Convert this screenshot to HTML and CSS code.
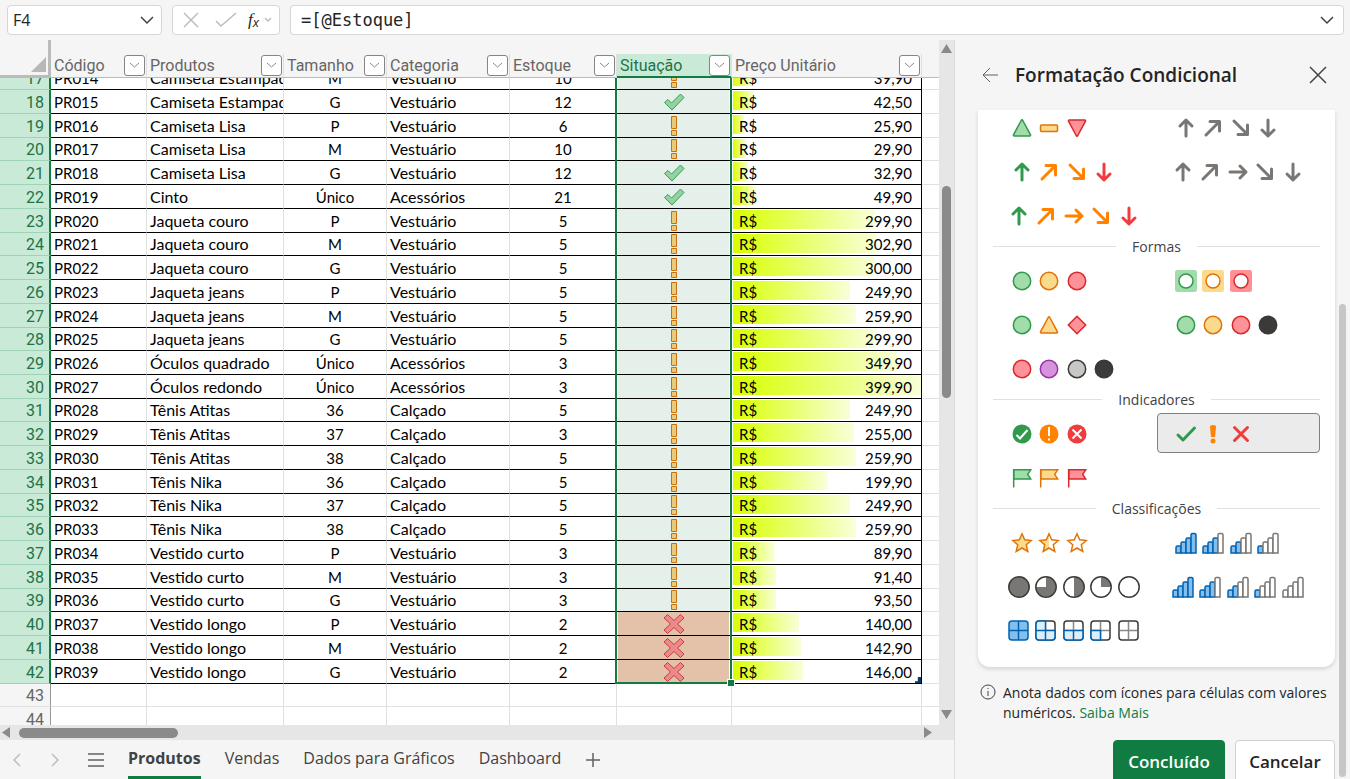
FILE: index.html
```html
<!DOCTYPE html>
<html lang="pt-BR">
<head>
    <meta charset="UTF-8">
    <meta name="viewport" content="width=device-width, initial-scale=1.0">
    <title>Controle de Estoque</title>
    <link rel="stylesheet" href="styles.css">
</head>
<body>
    <header class="formula-bar">
        <div class="name-box">
            <input type="text" value="F4" aria-label="Caixa de nome">
            <svg width="14" height="14" viewBox="0 0 14 14"><path d="M1 4l6 6 6-6"/></svg>
        </div>
        <div class="fx-box">
            <button aria-label="Cancelar entrada"><svg class="muted" width="18" height="18" viewBox="0 0 18 18"><path d="M2 2l14 14M16 2L2 16"/></svg></button>
            <button aria-label="Confirmar entrada"><svg class="muted" width="22" height="18" viewBox="0 0 22 18"><path d="M1 10l5 5L21 2"/></svg></button>
            <button class="fx" aria-label="Inserir função"><i>f</i><i class="fx-x">x</i><svg class="muted" width="8" height="8" viewBox="0 0 8 8"><path d="M1 2l3 3 3-3"/></svg></button>
        </div>
        <div class="formula-box">
            <input type="text" value="=[@Estoque]" aria-label="Barra de fórmulas">
            <svg width="14" height="14" viewBox="0 0 14 14"><path d="M1 4l6 6 6-6"/></svg>
        </div>
    </header>

    <div class="workspace">
        <main class="book">
            <div class="sheet-area">
                <div class="grid">
                    <div class="grid-top"></div>
                    <table class="sheet">
                        <colgroup>
                            <col class="col-num"><col class="col-codigo"><col class="col-produto"><col class="col-tamanho">
                            <col class="col-categoria"><col class="col-estoque"><col class="col-situacao"><col class="col-preco"><col>
                        </colgroup>
                        <thead><tr id="head-row"></tr></thead>
                    </table>
                    <div class="grid-scroll" id="grid-scroll">
                        <table class="sheet">
                            <colgroup>
                                <col class="col-num"><col class="col-codigo"><col class="col-produto"><col class="col-tamanho">
                                <col class="col-categoria"><col class="col-estoque"><col class="col-situacao"><col class="col-preco"><col>
                            </colgroup>
                            <tbody id="rows"></tbody>
                        </table>
                    </div>
                </div>
                <div class="vscroll">
                    <span class="arrow-up"></span>
                    <span class="vthumb"></span>
                    <span class="arrow-down"></span>
                </div>
            </div>
            <div class="hscroll">
                <span class="arrow-left"></span>
                <span class="hthumb"></span>
                <span class="arrow-right"></span>
            </div>
            <nav class="tabs">
                <button class="tab-nav" aria-label="Anterior"><svg width="10" height="16" viewBox="0 0 10 16"><path d="M8 2L2 8l6 6"/></svg></button>
                <button class="tab-nav" aria-label="Próxima"><svg width="10" height="16" viewBox="0 0 10 16"><path d="M2 2l6 6-6 6"/></svg></button>
                <button class="tab-menu" aria-label="Todas as planilhas"><svg width="16" height="16" viewBox="0 0 16 16"><path d="M0 2h16M0 8h16M0 14h16"/></svg></button>
                <button class="tab active">Produtos</button>
                <button class="tab">Vendas</button>
                <button class="tab">Dados para Gráficos</button>
                <button class="tab">Dashboard</button>
                <button class="tab-add" aria-label="Nova planilha"><svg width="16" height="16" viewBox="0 0 16 16"><path d="M8 1v14M1 8h14"/></svg></button>
            </nav>
        </main>

        <aside class="panel">
            <div class="panel-head">
                <button aria-label="Voltar"><svg class="back" width="18" height="18" viewBox="0 0 18 18"><path d="M17 9H2M9 2L2 9l7 7"/></svg></button>
                <h1>Formatação Condicional</h1>
                <button aria-label="Fechar"><svg width="18" height="18" viewBox="0 0 18 18"><path d="M1 1l16 16M17 1L1 17"/></svg></button>
            </div>
            <div class="card">
                <div class="icon-sets" id="icon-sets"></div>
            </div>
            <div class="hint">
                <svg width="16" height="16" viewBox="0 0 16 16"><circle cx="8" cy="8" r="7"/><path d="M8 7v5M8 4v1"/></svg>
                <p>Anota dados com ícones para células com valores numéricos. <a href="#">Saiba Mais</a></p>
            </div>
            <div class="actions">
                <button class="btn primary">Concluído</button>
                <button class="btn">Cancelar</button>
            </div>
            <span class="panel-thumb"></span>
        </aside>
    </div>

    <script>
        const columns = ['Código', 'Produtos', 'Tamanho', 'Categoria', 'Estoque', 'Situação', 'Preço Unitário'];

        // produto, tamanho, categoria, estoque, preço (a partir de PR014)
        const products = [
            ['Camiseta Estampada', 'M', 'Vestuário', 10, 39.9],
            ['Camiseta Estampada', 'G', 'Vestuário', 12, 42.5],
            ['Camiseta Lisa', 'P', 'Vestuário', 6, 25.9],
            ['Camiseta Lisa', 'M', 'Vestuário', 10, 29.9],
            ['Camiseta Lisa', 'G', 'Vestuário', 12, 32.9],
            ['Cinto', 'Único', 'Acessórios', 21, 49.9],
            ['Jaqueta couro', 'P', 'Vestuário', 5, 299.9],
            ['Jaqueta couro', 'M', 'Vestuário', 5, 302.9],
            ['Jaqueta couro', 'G', 'Vestuário', 5, 300],
            ['Jaqueta jeans', 'P', 'Vestuário', 5, 249.9],
            ['Jaqueta jeans', 'M', 'Vestuário', 5, 259.9],
            ['Jaqueta jeans', 'G', 'Vestuário', 5, 299.9],
            ['Óculos quadrado', 'Único', 'Acessórios', 3, 349.9],
            ['Óculos redondo', 'Único', 'Acessórios', 3, 399.9],
            ['Tênis Atitas', '36', 'Calçado', 5, 249.9],
            ['Tênis Atitas', '37', 'Calçado', 3, 255],
            ['Tênis Atitas', '38', 'Calçado', 5, 259.9],
            ['Tênis Nika', '36', 'Calçado', 5, 199.9],
            ['Tênis Nika', '37', 'Calçado', 5, 249.9],
            ['Tênis Nika', '38', 'Calçado', 5, 259.9],
            ['Vestido curto', 'P', 'Vestuário', 3, 89.9],
            ['Vestido curto', 'M', 'Vestuário', 3, 91.4],
            ['Vestido curto', 'G', 'Vestuário', 3, 93.5],
            ['Vestido longo', 'P', 'Vestuário', 2, 140],
            ['Vestido longo', 'M', 'Vestuário', 2, 142.9],
            ['Vestido longo', 'G', 'Vestuário', 2, 146]
        ];
        const maxPrice = 399.9;

        const status = {
            ok: '<svg class="st-ok" width="22" height="20" viewBox="0 0 22 20"><path d="M1.500 10.500L5 7.500l3.500 3.500L17.500 2 21 5.500 9 18z"/></svg>',
            warn: '<svg class="st-warn" width="22" height="20" viewBox="0 0 22 20"><path d="M8.500 .5h5v12h-5zM8.500 14.500h5v5h-5z"/></svg>',
            bad: '<svg class="st-bad" width="22" height="20" viewBox="0 0 22 20"><path d="M4.500 .5L11 6.500 17.500 .5 21 4 14.500 10 21 16l-3.500 3.500L11 13.500l-6.500 6L1 16l6.500-6L1 4z"/></svg>'
        };

        document.getElementById('head-row').innerHTML = '<th class="corner"><span></span></th>' + columns.map(name => `
            <th class="${name === 'Situação' ? 'selected' : ''}">
                <div class="th-box"><span>${name}</span>
                    <button aria-label="Filtrar ${name}"><svg width="11" height="7" viewBox="0 0 11 7"><path d="M1 1l4.500 4L10 1"/></svg></button>
                </div>
            </th>`).join('') + '<th></th>';

        const rows = products.map((p, i) => {
            const [name, size, category, stock, price] = p;
            const kind = stock > 10 ? 'ok' : stock > 2 ? 'warn' : 'bad';
            const last = i === products.length - 1;
            return `<tr class="filled${last ? ' last' : ''}">
                <th>${17 + i}</th>
                <td>PR0${14 + i}</td>
                <td class="name">${name}</td>
                <td class="center">${size}</td>
                <td class="name">${category}</td>
                <td class="center">${stock}</td>
                <td class="situacao ${kind}">${status[kind]}</td>
                <td class="preco" style="background-size: ${(price / maxPrice * 100).toFixed(0)}% 19px">
                    <div class="money"><span>R$</span><span>${price.toFixed(2).replace('.', ',')}</span></div>
                </td>
                <td></td>
            </tr>`;
        });
        [43, 44].forEach(n => rows.push(`<tr><th>${n}</th>${'<td></td>'.repeat(8)}</tr>`));
        document.getElementById('rows').innerHTML = rows.join('');
        document.getElementById('grid-scroll').scrollTop = 12;

        // Every glyph is drawn in a 24x24 box
        const star = 'M12 2.800l2.700 6 6.500.7-4.900 4.300 1.500 6.700-5.800-3.500-5.800 3.500 1.500-6.700L2.800 9.500l6.500-.7z';

        function bars(n) {
            return [[2, 15], [7, 11], [12, 7], [17, 2.5]].map(([x, y], i) =>
                `<path class="${i < n ? 'bar-on' : 'bar-off'}" d="M${x} 22V${y + 1.5}q0-1.500 1.500-1.500h2q1.500 0 1.500 1.500V22z"/>`).join('');
        }

        function boxes(n) {
            if (n === 4) {
                return '<rect class="box-full" x="2" y="2" width="19" height="19" rx="3"/><path class="box-line" d="M11.500 2v19M2 11.500h19"/>';
            }
            const on = [
                '',
                'M2 11.500h9.500V21H5q-3 0-3-3z',
                'M2 11.500h19V18q0 3-3 3H5q-3 0-3-3zM11.500 11.500V21',
                'M11.500 2v9.500H21V18q0 3-3 3H5q-3 0-3-3V5q0-3 3-3zM2 11.500h9.500V21'
            ][n];
            return `<rect class="box-off" x="2" y="2" width="19" height="19" rx="3"/><path class="box-grid" d="M11.500 3v17M3 11.500h17"/><path class="box-on" d="${on}"/>`;
        }

        const glyphs = {
            up: '<path class="line" d="M12 20V4.500M6 10l6-6 6 6"/>',
            down: '<path class="line" d="M12 4v15.500M6 14l6 6 6-6"/>',
            right: '<path class="line" d="M4 12h15.500M14 6l6 6-6 6"/>',
            ne: '<path class="line" d="M5 19L18.500 5.500M9 5.500h9.500V15"/>',
            se: '<path class="line" d="M5 5l13.500 13.500M9 18.500h9.500V9"/>',
            triangle: '<path class="shape" d="M11.200 4.500q.8-1.300 1.600 0l7.700 14.300q.3 1.200-.8 1.200H4.300q-1.100 0-.8-1.200z"/>',
            triangleDown: '<path class="shape" d="M11.200 19.500q.8 1.300 1.600 0l7.700-14.300q.3-1.200-.8-1.200H4.300q-1.100 0-.8 1.200z"/>',
            dash: '<rect class="shape" x="3.500" y="9" width="17" height="6.500" rx="1"/>',
            circle: '<circle class="shape" cx="12" cy="12" r="8.700"/>',
            framed: '<rect class="frame" x="1" y="1" width="22" height="22" rx="2.500"/><circle class="hole" cx="12" cy="12" r="7"/>',
            diamond: '<path class="shape" d="M12 3.300l8.700 8.700-8.700 8.700L3.300 12z"/>',
            badgeOk: '<circle class="solid" cx="12" cy="12" r="9.500"/><path class="mark" d="M6.500 13l3.500 3.500 7.500-8.500"/>',
            badgeWarn: '<circle class="solid" cx="12" cy="12" r="9.500"/><path class="mark" d="M12 5v9M12 16.500v2"/>',
            badgeBad: '<circle class="solid" cx="12" cy="12" r="9.500"/><path class="mark" d="M7.500 7.500l9 9M16.500 7.500l-9 9"/>',
            check: '<path class="line" d="M4 13l5 5L20.500 6"/>',
            bang: '<path class="solid" d="M9 4.500q0-1.500 3-1.500t3 1.500l-1 10.500h-4z"/><circle class="solid" cx="12" cy="19" r="2.500"/>',
            cross: '<path class="line" d="M5.500 5.500l13 13M18.500 5.500l-13 13"/>',
            flag: '<path class="shape" d="M3.700 3.800h17l-3 4.500 3 4.700h-17z"/><path class="pole" d="M3.700 3v18.500"/>',
            starFull: `<path class="shape" d="${star}"/>`,
            starHalf: `<path class="tint" d="M12 2.800v14.200l-5.800 3.500 1.500-6.700L2.800 9.500l6.500-.7z"/><path class="outline" d="${star}"/>`,
            starEmpty: `<path class="outline" d="${star}"/>`,
            pie4: '<circle class="pie" cx="12" cy="12" r="10.200"/>',
            pie3: '<path class="pie-fill" d="M12 12V2a10 10 0 1 1-10 10z"/><circle class="pie-ring" cx="12" cy="12" r="10.200"/>',
            pie2: '<path class="pie-fill" d="M12 2a10 10 0 0 1 0 20z"/><circle class="pie-ring" cx="12" cy="12" r="10.200"/>',
            pie1: '<path class="pie-fill" d="M12 12V2a10 10 0 0 1 10 10z"/><circle class="pie-ring" cx="12" cy="12" r="10.200"/>',
            pie0: '<circle class="pie-ring" cx="12" cy="12" r="10.200"/>'
        };
        for (let n = 0; n <= 4; n++) {
            glyphs['bars' + n] = bars(n);
            glyphs['boxes' + n] = boxes(n);
        }

        const groups = [
            { options: [
                'triangle:green dash:amber triangleDown:red',
                'up:gray ne:gray se:gray down:gray',
                'up:green ne:orange se:orange down:coral',
                'up:gray ne:gray right:gray se:gray down:gray',
                'up:green ne:orange right:orange se:orange down:coral'
            ] },
            { title: 'Formas', options: [
                'circle:green circle:amber circle:red',
                'framed:green framed:amber framed:red',
                'circle:green triangle:amber diamond:red',
                'circle:green circle:amber circle:red circle:black',
                'circle:red circle:purple circle:silver circle:black'
            ] },
            { title: 'Indicadores', options: [
                'badgeOk:green badgeWarn:orange badgeBad:coral',
                'check:green bang:orange cross:coral',
                'flag:green flag:amber flag:red'
            ] },
            { title: 'Classificações', options: [
                'starFull:amber starHalf:amber starEmpty:amber',
                'bars4 bars3 bars2 bars1',
                'pie4 pie3 pie2 pie1 pie0',
                'bars4 bars3 bars2 bars1 bars0',
                'boxes4 boxes3 boxes2 boxes1 boxes0'
            ] }
        ];
        const selectedSet = 'check:green bang:orange cross:coral';
        const offsets = [0, 27, 55, 82, 110];

        function renderOption(set) {
            const items = set.split(' ');
            const drawing = items.map((item, i) => {
                const [glyph, color] = item.split(':');
                return `<g class="${color || ''}" transform="translate(${offsets[i]} 0)">${glyphs[glyph]}</g>`;
            }).join('');
            const classes = ['option'];
            if (items.length === 5) classes.push('wide');
            if (set === selectedSet) classes.push('selected');
            return `<button class="${classes.join(' ')}" aria-label="Conjunto de ${items.length} ícones"><svg width="136" height="24" viewBox="0 0 136 24">${drawing}</svg></button>`;
        }

        document.getElementById('icon-sets').innerHTML = groups.map(g => `
            ${g.title ? `<h2>${g.title}</h2>` : ''}
            <div class="options">${g.options.map(renderOption).join('')}</div>`).join('');
    </script>
</body>
</html>
```
FILE: styles.css
```css
* {
    margin: 0;
    padding: 0;
    box-sizing: border-box;
}

body {
    height: 100vh;
    display: flex;
    flex-direction: column;
    overflow: hidden;
    background: #f5f5f5;
    color: #242424;
    font-family: 'Open Sans', sans-serif;
    font-size: 14px;
}

button {
    border: none;
    background: none;
    font: inherit;
    color: inherit;
    cursor: pointer;
}

svg {
    display: block;
    flex: none;
    fill: none;
    stroke: #424242;
    stroke-width: 1.5;
}

/* Formula bar */
.formula-bar {
    display: flex;
    gap: 10px;
    height: 40px;
    padding: 5px 6px 5px 7px;
    flex: none;
}

.name-box,
.fx-box,
.formula-box {
    display: flex;
    align-items: center;
    height: 30px;
    background: #fff;
    border: 1px solid #d6d6d6;
    border-radius: 4px;
}

.name-box {
    width: 155px;
    padding: 0 7px 0 5px;
}

.formula-box {
    flex: 1;
    padding: 0 9px 0 10px;
}

.name-box input,
.formula-box input {
    flex: 1;
    min-width: 0;
    border: none;
    outline: none;
    color: #242424;
    font-family: 'Open Sans', sans-serif;
    font-size: 16px;
}

.formula-box input {
    font-family: 'DejaVu Sans Mono', monospace;
    font-size: 17px;
}

.fx-box {
    width: 108px;
    padding: 0 4px 0 9px;
    gap: 15px;
}

.muted {
    stroke: #bdbdbd;
}

.fx {
    display: flex;
    align-items: center;
    margin-left: -4px;
    font-family: 'Liberation Serif', serif;
    font-size: 17px;
}

.fx-x {
    font-family: 'Open Sans', sans-serif;
    font-size: 13px;
    padding-top: 4px;
    margin-right: 5px;
}

/* Layout */
.workspace {
    flex: 1;
    min-height: 0;
    display: flex;
}

.book {
    flex: 1;
    min-width: 0;
    display: flex;
    flex-direction: column;
}

.sheet-area {
    flex: 1;
    min-height: 0;
    display: flex;
}

.grid {
    flex: 1;
    min-width: 0;
    display: flex;
    flex-direction: column;
}

.grid-top {
    flex: none;
    width: 51px;
    height: 14px;
    border-right: 3px solid #bbb;
}

.grid-scroll {
    flex: 1;
    min-height: 0;
    overflow: hidden;
    background: #fff;
}

/* Spreadsheet */
.sheet {
    width: 100%;
    table-layout: fixed;
    border-collapse: separate;
    border-spacing: 0;
    color: #000;
    font-family: Lato, sans-serif;
    font-size: 15px;
    line-height: 20px;
}

.col-num { width: 51px; }
.col-codigo { width: 96px; }
.col-produto { width: 137px; }
.col-tamanho { width: 103px; }
.col-categoria { width: 123px; }
.col-estoque { width: 107px; }
.col-situacao { width: 115px; }
.col-preco { width: 190px; }

.sheet thead th {
    height: 24px;
    border-right: 1px solid #e0e0e0;
    border-bottom: 1px solid #bbb;
    color: #666;
    font-family: Roboto, sans-serif;
    font-size: 16px;
    font-weight: 400;
    text-align: left;
}

.sheet thead th.corner {
    border-right: 3px solid #bbb;
    border-bottom: 3px solid #bbb;
}

.corner span {
    display: block;
    margin-left: auto;
    margin-right: 2px;
    width: 15px;
    height: 15px;
    background: #b8b8b8;
    clip-path: polygon(100% 0, 100% 100%, 0 100%);
}

.sheet thead th.selected {
    background: #caead8;
    border-bottom-color: #107c41;
    box-shadow: inset 0 -1px #107c41;
    color: #217346;
}

.sheet thead th:last-child {
    border-right: none;
}

.th-box {
    display: flex;
    align-items: center;
    justify-content: space-between;
    height: 21px;
    padding: 0 1px 0 3px;
}

.th-box button {
    display: flex;
    align-items: center;
    justify-content: center;
    width: 21px;
    height: 21px;
    background: #fff;
    border: 1px solid #858585;
    border-radius: 3px;
}

.th-box svg {
    stroke: #8a8a8a;
    stroke-width: 1;
}

.sheet tbody tr {
    height: 24px;
}

/* the zoom level drops one pixel every few rows */
.sheet tbody tr:nth-child(4n):nth-child(-n+12),
.sheet tbody tr:nth-child(4n+3):nth-child(n+15) {
    height: 23px;
}

.sheet td,
.sheet tbody th {
    padding: 1px 3px;
    border-right: 1px solid #e0e0e0;
    border-bottom: 1px solid #e0e0e0;
    overflow: hidden;
    white-space: nowrap;
}

.sheet .name {
    font-size: 16px;
}

.sheet tbody th {
    padding: 2px 6px 0 0;
    background: #f5f5f5;
    border-right-color: #999;
    color: #666;
    font-family: Roboto, sans-serif;
    font-size: 16px;
    font-weight: 400;
    text-align: right;
}

.sheet .filled th {
    padding-right: 5px;
    background: #caead8;
    border-right: 2px solid #107c41;
    border-bottom-color: #9fd3b8;
    color: #217346;
}

.sheet .filled td {
    border-bottom-color: #000;
}

.sheet .filled td:last-child {
    border-bottom-color: #e0e0e0;
}

.sheet td:last-child {
    border-right: none;
}

.center {
    text-align: center;
}

.sheet .situacao {
    position: relative;
    padding: 0;
    overflow: visible;
    background: #e6f0ea;
    border-right-color: #107c41;
    box-shadow: inset 1px 0 #fff, inset -2px 0 #fff;
}

.sheet .situacao.bad {
    background: #e4c2aa;
}

.situacao::after {
    content: '';
    position: absolute;
    inset: 0 -1px -1px -2px;
    border: solid #107c41;
    border-width: 0 2px;
}

.situacao svg {
    margin: 0 auto;
    stroke-width: 1;
}

.last .situacao::after {
    border-bottom-width: 2px;
}

.last .situacao::before {
    content: '';
    position: absolute;
    z-index: 1;
    right: -3px;
    bottom: -3px;
    width: 6px;
    height: 6px;
    background: #107c41;
    outline: 1px solid #fff;
}

.st-ok {
    fill: #93d3a2;
    stroke: #379e57;
}

.st-warn {
    fill: #e6cb7d;
    stroke: #c96f0c;
}

.st-bad {
    fill: #ea8a8e;
    stroke: #cb3b36;
}

.sheet .preco {
    padding: 1px 9px 1px 7px;
    border-right-color: #000;
    background: linear-gradient(to right, #d9ff00, #f8ffd9) no-repeat 1px 1px;
}

.sheet .last .preco {
    position: relative;
}

.last .preco::after {
    content: '';
    position: absolute;
    right: -1px;
    bottom: -1px;
    width: 7px;
    height: 7px;
    background: #0b3a66;
    clip-path: polygon(40% 0, 100% 0, 100% 100%, 0 100%, 0 60%, 40% 60%);
}

.money {
    display: flex;
    justify-content: space-between;
}

/* Scrollbars */
.vscroll {
    flex: none;
    display: flex;
    flex-direction: column;
    align-items: center;
    width: 15px;
    padding: 4px 0 6px;
    background: #e6e6e6;
}

.arrow-up,
.arrow-down {
    width: 11px;
    height: 9px;
    background: #8a8a8a;
    clip-path: polygon(50% 0, 100% 100%, 0 100%);
}

.arrow-down {
    margin-top: auto;
    clip-path: polygon(0 0, 100% 0, 50% 100%);
}

.vthumb {
    width: 9px;
    height: 212px;
    margin-top: 133px;
    background: #8a8a8a;
    border-radius: 5px;
}

.hscroll {
    flex: none;
    display: flex;
    align-items: center;
    height: 15px;
    padding: 0 22px 0 2px;
    background: #e6e6e6;
}

.arrow-left,
.arrow-right {
    width: 8px;
    height: 11px;
    background: #8a8a8a;
    clip-path: polygon(0 50%, 100% 0, 100% 100%);
}

.arrow-right {
    margin-left: auto;
    clip-path: polygon(0 0, 100% 50%, 0 100%);
}

.hthumb {
    width: 159px;
    height: 10px;
    margin-left: 9px;
    background: #8a8a8a;
    border-radius: 5px;
}

/* Sheet tabs */
.tabs {
    flex: none;
    display: flex;
    align-items: center;
    gap: 24px;
    height: 39px;
    padding-left: 12px;
    color: #424242;
    font-size: 16px;
}

.tabs svg {
    stroke: #616161;
}

.tabs .tab-nav {
    margin-right: 4px;
}

.tabs .tab-nav svg {
    stroke: #bdbdbd;
}

.tab {
    height: 39px;
    border-bottom: 3px solid transparent;
}

.tab.active {
    border-bottom-color: #107c41;
    font-weight: 700;
}

/* Conditional formatting panel */
.panel {
    position: relative;
    flex: none;
    width: 396px;
    padding: 0 15px 0 23px;
    border-left: 1px solid #dcdcdc;
}

.panel-head {
    display: flex;
    align-items: center;
    height: 70px;
    padding: 0 8px 0 3px;
}

.panel-head h1 {
    flex: 1;
    margin-left: 16px;
    font-size: 19px;
    font-weight: 600;
    line-height: 24px;
}

.panel-head .back {
    stroke: #616161;
    stroke-width: 1;
}

.card {
    overflow: hidden;
    background: #fff;
    border-radius: 0 0 12px 12px;
    box-shadow: 0 2px 4px rgba(0, 0, 0, 0.14);
}

.icon-sets {
    margin-top: -3px;
    padding: 0 15px 17px;
}

.icon-sets h2 {
    display: flex;
    align-items: center;
    gap: 16px;
    height: 25px;
    padding-bottom: 2px;
    color: #424242;
    font-size: 14px;
    font-weight: 400;
}

.icon-sets h2::before,
.icon-sets h2::after {
    content: '';
    flex: 1;
    height: 1px;
    background: #e0e0e0;
}

.options {
    display: grid;
    grid-template-columns: 1fr 1fr;
    row-gap: 4px;
}

.option {
    height: 40px;
    padding: 1px 0 0 16px;
    border: 1px solid transparent;
    border-radius: 4px;
}

.option.wide {
    padding-left: 13px;
}

.option.selected {
    background: #ebebeb;
    border-color: #808080;
}

.green { color: #309a4c; --tint: #a1dcaa; }
.amber { color: #e17309; --tint: #fada8d; }
.orange { color: #ff8300; }
.red { color: #d9292b; --tint: #ff9298; }
.coral { color: #f03c3c; }
.purple { color: #9737a5; --tint: #d692db; }
.silver { color: #3b3a38; --tint: #c9c7c6; }
.black { color: #3b3a38; --tint: #3b3a38; }
.gray { color: #797673; }

.line {
    stroke: currentColor;
    stroke-width: 3;
    stroke-linecap: round;
    stroke-linejoin: round;
}

.shape {
    fill: var(--tint);
    stroke: currentColor;
}

.outline,
.pole {
    stroke: currentColor;
}

.tint,
.frame {
    fill: var(--tint);
    stroke: none;
}

.hole {
    fill: #fff;
    stroke: currentColor;
}

.solid {
    fill: currentColor;
    stroke: none;
}

.mark {
    stroke: #fff;
    stroke-width: 2;
}

.bar-on {
    fill: #83beec;
    stroke: #0063b1;
}

.bar-off {
    fill: #fff;
    stroke: #797673;
}

.box-full {
    fill: #83beec;
    stroke: #0063b1;
}

.box-line {
    stroke: #0063b1;
}

.box-off {
    stroke: #3b3a38;
}

.box-grid {
    stroke: #8a8886;
}

.box-on {
    fill: #dceefa;
    stroke: #0063b1;
}

.pie {
    fill: #797774;
    stroke: #3b3a38;
}

.pie-fill {
    fill: #797774;
    stroke: none;
}

.pie-ring {
    stroke: #3b3a38;
}

.hint {
    display: flex;
    gap: 7px;
    margin-top: 16px;
    padding-left: 2px;
    line-height: 20px;
}

.hint svg {
    margin-top: 1px;
    stroke-width: 1;
}

.hint a {
    color: #107c41;
    text-decoration: none;
}

.actions {
    display: flex;
    justify-content: flex-end;
    gap: 10px;
    margin-top: 17px;
}

.btn {
    height: 43px;
    width: 100px;
    background: #fff;
    border: 1px solid #d1d1d1;
    border-radius: 4px;
    font-size: 17px;
    font-weight: 600;
}

.btn.primary {
    width: 112px;
    background: #107c41;
    border-color: #107c41;
    color: #fff;
}

.panel-thumb {
    position: absolute;
    right: 4px;
    bottom: 2px;
    width: 7px;
    height: 473px;
    background: #c8c6c4;
    border-radius: 4px;
}
```
